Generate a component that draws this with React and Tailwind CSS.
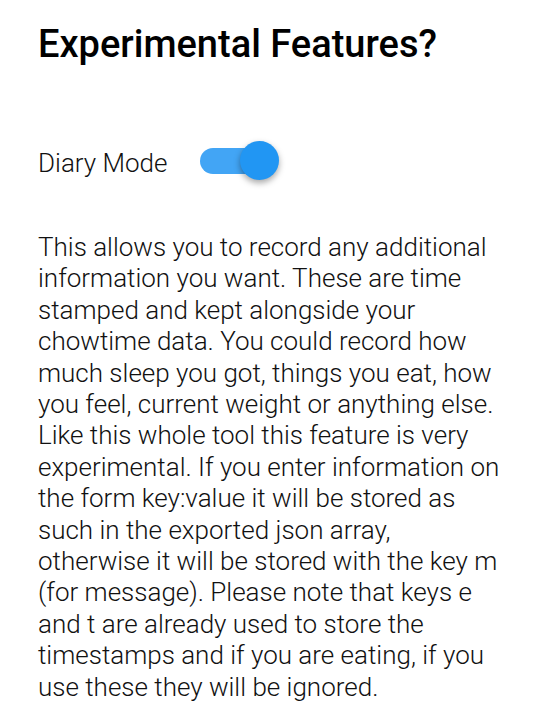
export default function App() {
  return (
    <div className="w-[540px] h-[718px] bg-white overflow-hidden px-[38px]" style={{ fontFamily: "Roboto, sans-serif" }}>
      <h1 className="pt-[20px] text-[38px] font-medium leading-[48px] text-black">Experimental Features?</h1>
      <div className="mt-[73px] flex items-center h-[40px]">
        <span className="text-[26px] font-light leading-[40px] text-[#111111] translate-y-[2px]">Diary Mode</span>
        <div className="relative ml-[33px] w-[79px] h-[40px] flex items-center">
          <div className="w-[70px] h-[26px] rounded-full bg-[#42a5f5]" />
          <div className="absolute right-0 top-0 w-[39px] h-[39px] rounded-full bg-[#2196f3] shadow-[0_3px_6px_rgba(0,0,0,0.35)]" />
        </div>
      </div>
      <p className="mt-[51px] text-[26px] font-light leading-[31.4px] text-[#111111]">
        This allows you to record any additional information you want. These are time stamped and kept alongside your chowtime data. You could record how much sleep you got, things you eat, how you feel, current weight or anything else. Like this whole tool this feature is very experimental. If you enter information on the form key:value it will be stored as such in the exported json array, otherwise it will be stored with the key m (for message). Please note that keys e and t are already used to store the timestamps and if you are eating, if you use these they will be ignored.
      </p>
    </div>
  );
}
